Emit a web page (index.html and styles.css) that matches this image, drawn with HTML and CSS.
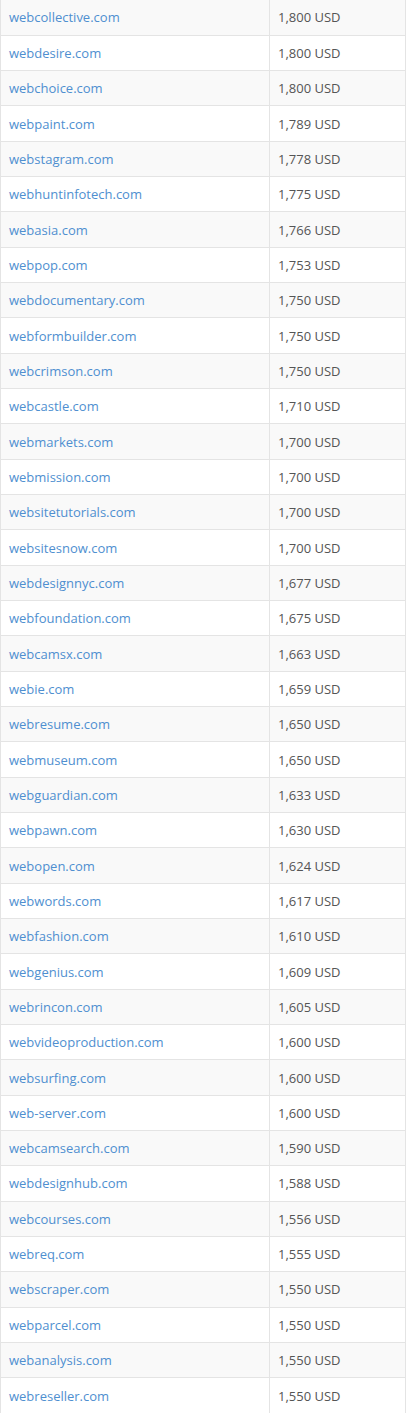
FILE: index.html
```html
<!DOCTYPE html>
<html>
<head>
<meta charset="utf-8">
<link rel="stylesheet" href="styles.css">
</head>
<body>
<table class="domains">
<tbody>
<tr><td class="name"><a href="#">webcollective.com</a></td><td class="price">1,800 USD</td></tr>
<tr><td class="name"><a href="#">webdesire.com</a></td><td class="price">1,800 USD</td></tr>
<tr><td class="name"><a href="#">webchoice.com</a></td><td class="price">1,800 USD</td></tr>
<tr><td class="name"><a href="#">webpaint.com</a></td><td class="price">1,789 USD</td></tr>
<tr><td class="name"><a href="#">webstagram.com</a></td><td class="price">1,778 USD</td></tr>
<tr><td class="name"><a href="#">webhuntinfotech.com</a></td><td class="price">1,775 USD</td></tr>
<tr><td class="name"><a href="#">webasia.com</a></td><td class="price">1,766 USD</td></tr>
<tr><td class="name"><a href="#">webpop.com</a></td><td class="price">1,753 USD</td></tr>
<tr><td class="name"><a href="#">webdocumentary.com</a></td><td class="price">1,750 USD</td></tr>
<tr><td class="name"><a href="#">webformbuilder.com</a></td><td class="price">1,750 USD</td></tr>
<tr><td class="name"><a href="#">webcrimson.com</a></td><td class="price">1,750 USD</td></tr>
<tr><td class="name"><a href="#">webcastle.com</a></td><td class="price">1,710 USD</td></tr>
<tr><td class="name"><a href="#">webmarkets.com</a></td><td class="price">1,700 USD</td></tr>
<tr><td class="name"><a href="#">webmission.com</a></td><td class="price">1,700 USD</td></tr>
<tr><td class="name"><a href="#">websitetutorials.com</a></td><td class="price">1,700 USD</td></tr>
<tr><td class="name"><a href="#">websitesnow.com</a></td><td class="price">1,700 USD</td></tr>
<tr><td class="name"><a href="#">webdesignnyc.com</a></td><td class="price">1,677 USD</td></tr>
<tr><td class="name"><a href="#">webfoundation.com</a></td><td class="price">1,675 USD</td></tr>
<tr><td class="name"><a href="#">webcamsx.com</a></td><td class="price">1,663 USD</td></tr>
<tr><td class="name"><a href="#">webie.com</a></td><td class="price">1,659 USD</td></tr>
<tr><td class="name"><a href="#">webresume.com</a></td><td class="price">1,650 USD</td></tr>
<tr><td class="name"><a href="#">webmuseum.com</a></td><td class="price">1,650 USD</td></tr>
<tr><td class="name"><a href="#">webguardian.com</a></td><td class="price">1,633 USD</td></tr>
<tr><td class="name"><a href="#">webpawn.com</a></td><td class="price">1,630 USD</td></tr>
<tr><td class="name"><a href="#">webopen.com</a></td><td class="price">1,624 USD</td></tr>
<tr><td class="name"><a href="#">webwords.com</a></td><td class="price">1,617 USD</td></tr>
<tr><td class="name"><a href="#">webfashion.com</a></td><td class="price">1,610 USD</td></tr>
<tr><td class="name"><a href="#">webgenius.com</a></td><td class="price">1,609 USD</td></tr>
<tr><td class="name"><a href="#">webrincon.com</a></td><td class="price">1,605 USD</td></tr>
<tr><td class="name"><a href="#">webvideoproduction.com</a></td><td class="price">1,600 USD</td></tr>
<tr><td class="name"><a href="#">websurfing.com</a></td><td class="price">1,600 USD</td></tr>
<tr><td class="name"><a href="#">web-server.com</a></td><td class="price">1,600 USD</td></tr>
<tr><td class="name"><a href="#">webcamsearch.com</a></td><td class="price">1,590 USD</td></tr>
<tr><td class="name"><a href="#">webdesignhub.com</a></td><td class="price">1,588 USD</td></tr>
<tr><td class="name"><a href="#">webcourses.com</a></td><td class="price">1,556 USD</td></tr>
<tr><td class="name"><a href="#">webreq.com</a></td><td class="price">1,555 USD</td></tr>
<tr><td class="name"><a href="#">webscraper.com</a></td><td class="price">1,550 USD</td></tr>
<tr><td class="name"><a href="#">webparcel.com</a></td><td class="price">1,550 USD</td></tr>
<tr><td class="name"><a href="#">webanalysis.com</a></td><td class="price">1,550 USD</td></tr>
<tr><td class="name"><a href="#">webreseller.com</a></td><td class="price">1,550 USD</td></tr>
</tbody>
</table>
</body>
</html>
```
FILE: styles.css
```css
html, body {
  margin: 0;
  padding: 0;
  background: #fff;
}
body {
  font-family: "Open Sans", "Liberation Sans", sans-serif;
  font-size: 13px;
  color: #555;
}
.domains {
  width: 406px;
  border-collapse: collapse;
  border-left: 1px solid #e4e4e4;
  border-right: 1px solid #e4e4e4;
}
.domains tr:nth-child(odd) td {
  background: #f9f9f9;
}
.domains td {
  height: 35.33px;
  box-sizing: border-box;
  padding: 0 8px;
  border-top: 1px solid #e4e4e4;
  vertical-align: middle;
  line-height: 18px;
}
.domains tr:first-child td {
  border-top: none;
}
.domains td.name {
  width: 269px;
  border-right: 1px solid #e4e4e4;
}
.domains a {
  color: #4f8fd0;
  text-decoration: none;
}
```
